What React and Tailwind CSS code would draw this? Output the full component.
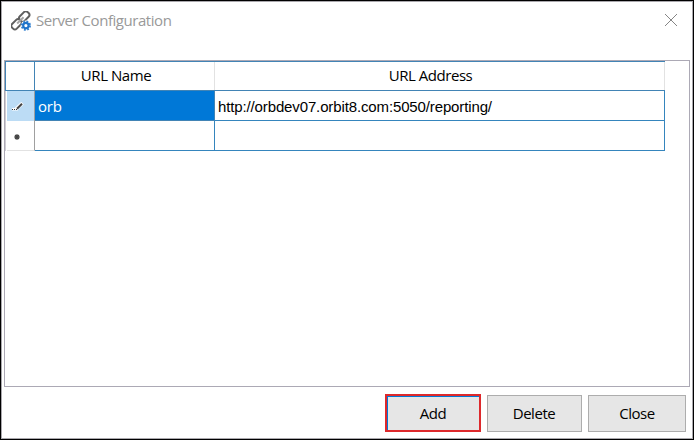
function ServerIcon() {
  return (
    <svg width="20" height="20" viewBox="0 0 20 20" fill="none">
      <g transform="rotate(-45 10 10)" stroke="#5f5f5f" strokeWidth="2">
        <rect x="-1" y="5.8" width="11" height="6.6" rx="2.6" />
        <rect x="10" y="5.8" width="11" height="6.6" rx="2.6" />
        <path d="M5.5 9.1h9" stroke="#a5a5a5" strokeWidth="2" />
      </g>
      <circle cx="14.9" cy="14.6" r="5.2" fill="#fff" />
      <circle cx="14.9" cy="14.6" r="4.2" stroke="#2f7fd0" strokeWidth="1.8" strokeDasharray="1.8 1.5" />
      <circle cx="14.9" cy="14.6" r="2.7" stroke="#1f74ca" strokeWidth="2.2" />
    </svg>
  );
}

function CloseIcon() {
  return (
    <svg width="12" height="12" viewBox="0 0 12 12" stroke="#858585" strokeWidth="1">
      <path d="M0 0l12 12M12 0L0 12" />
    </svg>
  );
}

function EditIcon() {
  return (
    <svg width="12" height="9" viewBox="0 0 12 9">
      <path d="M4 7L10.5 1.2" stroke="#fff" strokeWidth="3.6" />
      <path d="M0 6h6v2.5H0z" fill="#fff" />
      <path d="M5 6.8L10 1.8" stroke="#444" strokeWidth="2" />
      <path d="M0 7h1v1H0zM2 7h1v1H2zM4 7h1v1H4z" fill="#333" />
    </svg>
  );
}

function NewRowIcon() {
  return (
    <svg width="6" height="6" viewBox="0 0 6 6" stroke="#444" strokeWidth="1.1">
      <circle cx="3" cy="3" r="1.9" fill="#555" stroke="none" />
      <path d="M3 0v6M0 3h6M1 1l4 4M5 1L1 5" />
    </svg>
  );
}

export default function App() {
  return (
    <div className="h-[440px] w-[694px] border border-black bg-white font-['Open_Sans','Noto_Sans',sans-serif] text-[15px] tracking-[-0.45px] text-black">
      <div className="flex h-full flex-col border border-[#aaa8ad] bg-white">
        <header className="flex h-[58px] items-start justify-between pl-[9px] pr-[15px]">
          <div className="flex items-start pt-[9px]">
            <ServerIcon />
            <h1 className="ml-[5px] h-5 whitespace-nowrap leading-[18px] text-[#999]">Server Configuration</h1>
          </div>
          <button className="mt-3"><CloseIcon /></button>
        </header>

        <main className="ml-[2px] h-[327px] w-[686px] border border-[#aca9b5] bg-white">
          <div className="w-[660px]">
            <div className="flex h-[30px] border-y border-l border-[#4284b5]">
              <div className="w-[29px] border-r border-[#4284b5]" />
              <div className="w-[180px] border-r border-[#e2e2e2] pr-[17px] text-center leading-[26px]">URL Name</div>
              <div className="flex-1 border-r border-[#e2e2e2] pr-[18px] text-center leading-[26px]">URL Address</div>
            </div>
            <div className="flex h-[30px] border-l border-[#cfcdd3]">
              <div className="ml-px flex w-[28px] items-center border-r border-[#a0a0a0] bg-[#bcdcf5] pl-[5px] pt-px"><EditIcon /></div>
              <div className="w-[180px] border-b border-r border-[#4284b5] bg-[#0078d7] pl-[3px] leading-[31px] tracking-[-0.2px] text-white">orb</div>
              <div className="flex-1 whitespace-nowrap border-b border-r border-[#3585bd] pl-[3px] font-['Liberation_Sans',Arial,sans-serif] leading-[31px] tracking-[-0.13px]">http://orbdev07.orbit8.com:5050/reporting/</div>
            </div>
            <div className="flex h-[30px] border-l border-[#cfcdd3]">
              <div className="ml-px flex w-[28px] items-center border-b border-r border-b-[#e2e2e2] border-r-[#a0a0a0] pl-[7px] pt-[2px]"><NewRowIcon /></div>
              <div className="w-[180px] border-b border-r border-[#3585bd]" />
              <div className="flex-1 border-b border-r border-[#3585bd]" />
            </div>
          </div>
        </main>

        <footer className="flex items-start justify-end gap-[6px] pr-[6px] pt-[7px]">
          <button className="h-[38px] w-[96px] border-2 border-[#dd292c] bg-[#e6e6e6]">
            <span className="block h-full border-l border-t border-[#0078d7] pr-px leading-[33px]">Add</span>
          </button>
          <button className="mt-px h-[37px] w-[95px] border border-[#adadad] bg-[#e6e6e6] pr-px leading-[35px]">Delete</button>
          <button className="mt-px h-[37px] w-[98px] border border-[#adadad] bg-[#e6e6e6] leading-[35px]">Close</button>
        </footer>
      </div>
    </div>
  );
}
